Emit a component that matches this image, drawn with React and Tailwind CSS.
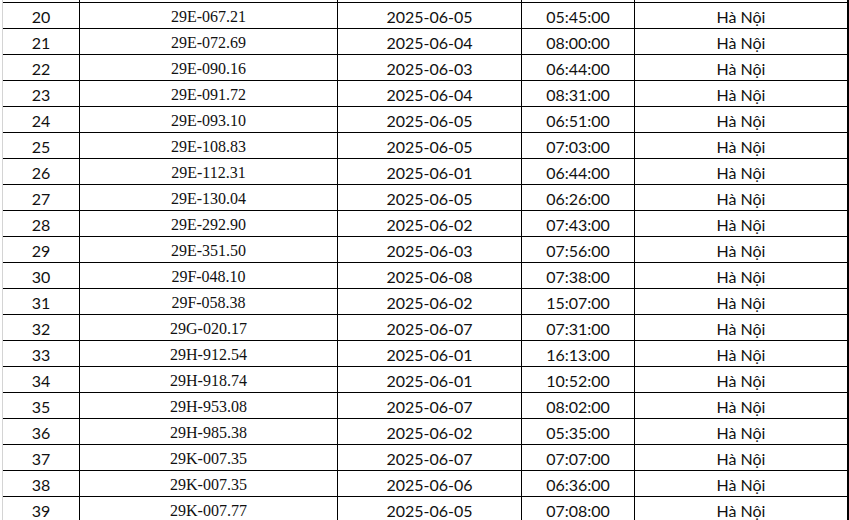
import React from "react";

const rows = [
  [20, "29E-067.21", "2025-06-05", "05:45:00"],
  [21, "29E-072.69", "2025-06-04", "08:00:00"],
  [22, "29E-090.16", "2025-06-03", "06:44:00"],
  [23, "29E-091.72", "2025-06-04", "08:31:00"],
  [24, "29E-093.10", "2025-06-05", "06:51:00"],
  [25, "29E-108.83", "2025-06-05", "07:03:00"],
  [26, "29E-112.31", "2025-06-01", "06:44:00"],
  [27, "29E-130.04", "2025-06-05", "06:26:00"],
  [28, "29E-292.90", "2025-06-02", "07:43:00"],
  [29, "29E-351.50", "2025-06-03", "07:56:00"],
  [30, "29F-048.10", "2025-06-08", "07:38:00"],
  [31, "29F-058.38", "2025-06-02", "15:07:00"],
  [32, "29G-020.17", "2025-06-07", "07:31:00"],
  [33, "29H-912.54", "2025-06-01", "16:13:00"],
  [34, "29H-918.74", "2025-06-01", "10:52:00"],
  [35, "29H-953.08", "2025-06-07", "08:02:00"],
  [36, "29H-985.38", "2025-06-02", "05:35:00"],
  [37, "29K-007.35", "2025-06-07", "07:07:00"],
  [38, "29K-007.35", "2025-06-06", "06:36:00"],
  [39, "29K-007.77", "2025-06-05", "07:08:00"],
];

const sans = "font-['Lato','Open_Sans',sans-serif] text-[16px] leading-[20px] pt-[4px]";
const serif = "font-['Liberation_Serif','Times_New_Roman',serif] text-[16px] leading-[20px] pt-[4px]";

// one spreadsheet row, cells bottom-ish aligned like Excel
const Row = ({ cells, top = true }) => (
  <div className={`flex h-[26px] ${top ? "border-t border-black" : ""}`}>
    <div className={`w-[77px] shrink-0 border-r border-black text-center ${sans}`}>{cells[0]}</div>
    <div className={`w-[258px] shrink-0 border-r border-black text-center ${serif}`}>{cells[1]}</div>
    <div className={`w-[184px] shrink-0 border-r border-black text-center ${sans}`}>{cells[2]}</div>
    <div className={`w-[113px] shrink-0 border-r border-black text-center ${sans}`}>{cells[3]}</div>
    <div className={`flex-1 border-r-2 border-black text-center ${sans}`}>{cells[4]}</div>
  </div>
);

export default function App() {
  return (
    <div className="w-[849px] h-[520px] overflow-hidden bg-white text-[#111]">
      <div className="ml-[2px] -mt-[24px] border-l border-[#d4d4d4]">
        <Row cells={["", "", "", "", ""]} />
        {rows.map((r) => (
          <Row key={r[0]} cells={[r[0], r[1], r[2], r[3], "Hà Nội"]} />
        ))}
      </div>
    </div>
  );
}
